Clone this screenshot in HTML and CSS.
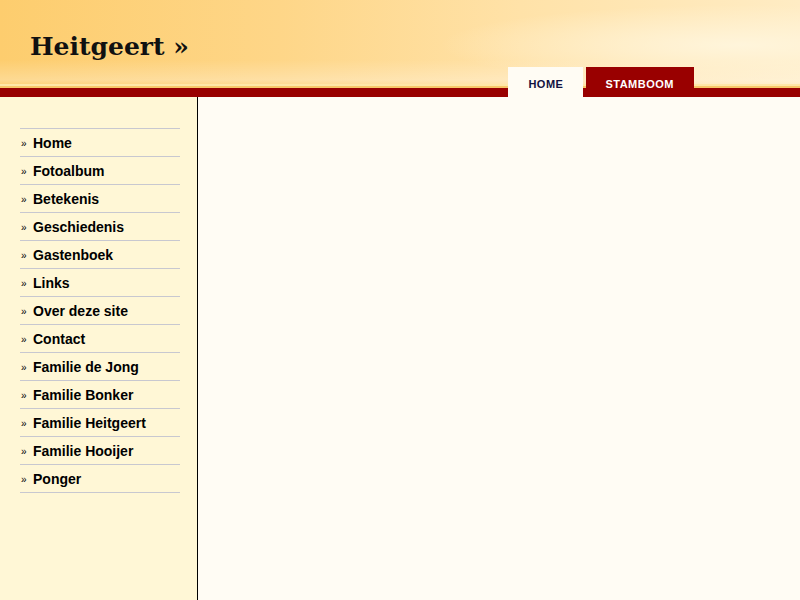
FILE: index.html
```html
<!DOCTYPE html>
<html>
<head>
<meta charset="utf-8">
<link rel="stylesheet" href="styles.css">
</head>
<body>
<div class="header">
  <h1 class="logo">Heitgeert »</h1>
  <ul class="tabs">
    <li class="tab tab-active">HOME</li>
    <li class="tab">STAMBOOM</li>
  </ul>
</div>
<div class="main">
  <div class="sidebar">
    <ul class="menu">
      <li><span class="raquo">»</span>Home</li>
      <li><span class="raquo">»</span>Fotoalbum</li>
      <li><span class="raquo">»</span>Betekenis</li>
      <li><span class="raquo">»</span>Geschiedenis</li>
      <li><span class="raquo">»</span>Gastenboek</li>
      <li><span class="raquo">»</span>Links</li>
      <li><span class="raquo">»</span>Over deze site</li>
      <li><span class="raquo">»</span>Contact</li>
      <li><span class="raquo">»</span>Familie de Jong</li>
      <li><span class="raquo">»</span>Familie Bonker</li>
      <li><span class="raquo">»</span>Familie Heitgeert</li>
      <li><span class="raquo">»</span>Familie Hooijer</li>
      <li><span class="raquo">»</span>Ponger</li>
    </ul>
  </div>
  <div class="content"></div>
</div>
</body>
</html>
```

FILE: styles.css
```css
html, body {
  margin: 0;
  padding: 0;
  height: 100%;
}
body {
  display: flex;
  flex-direction: column;
  background: #fffcf4;
  font-family: "Liberation Sans", Arial, sans-serif;
}
.header {
  height: 97px;
  box-sizing: border-box;
  display: flex;
  justify-content: space-between;
  align-items: flex-start;
  padding: 0 106px 0 30px;
  background:
    linear-gradient(to bottom, rgba(0,0,0,0) 0, rgba(0,0,0,0) 84px, #ffe7a8 84px, #ffe7a8 86px, #f7c76a 86px, #f7c76a 88px, #990000 88px, #990000 97px),
    radial-gradient(ellipse 300px 40px at 740px 45px, rgba(255,246,222,0.9), rgba(255,246,222,0) 100%),
    linear-gradient(to bottom, rgba(255,255,255,0) 0, rgba(255,255,255,0) 60px, rgba(255,255,255,0.25) 80px, rgba(255,255,255,0.1) 84px),
    linear-gradient(to right, #fdcd6e 0%, #fed688 35%, #ffe2a8 65%, #ffecc4 100%);
}
.logo {
  margin: 32px 0 0 0;
  font-family: "DejaVu Serif", Georgia, serif;
  font-weight: bold;
  font-size: 25px;
  line-height: 30px;
  color: #111;
  letter-spacing: 0;
}
.tabs {
  list-style: none;
  margin: 67px 0 0 0;
  padding: 0;
  display: flex;
  gap: 3px;
}
.tab {
  height: 30px;
  box-sizing: border-box;
  padding: 10px 20px 0 19px;
  font-size: 11px;
  font-weight: bold;
  letter-spacing: 0.5px;
  line-height: 14px;
  background: #990000;
  color: #fff;
}
.tab-active {
  background: #fffcf4;
  color: #111140;
  padding: 10px 20px 0 20px;
}
.main {
  flex: 1;
  display: flex;
}
.sidebar {
  background: #fff7d6;
  border-right: 1px solid #000;
  padding: 31px 17px 0 20px;
  box-sizing: border-box;
  width: 198px;
}
.menu {
  list-style: none;
  margin: 0;
  padding: 0;
  width: 160px;
  border-bottom: 1px solid #c8c8d0;
}
.menu li {
  border-top: 1px solid #c8c8d0;
  height: 28px;
  box-sizing: border-box;
  padding-top: 1px;
  line-height: 27px;
  font-size: 14px;
  font-weight: bold;
  color: #000;
}
.raquo {
  display: inline-block;
  width: 13px;
  padding-left: 1px;
  box-sizing: border-box;
  font-size: 10px;
  font-weight: normal;
  vertical-align: top;
}
.content {
  flex: 1;
  background: #fffcf4;
}
```
